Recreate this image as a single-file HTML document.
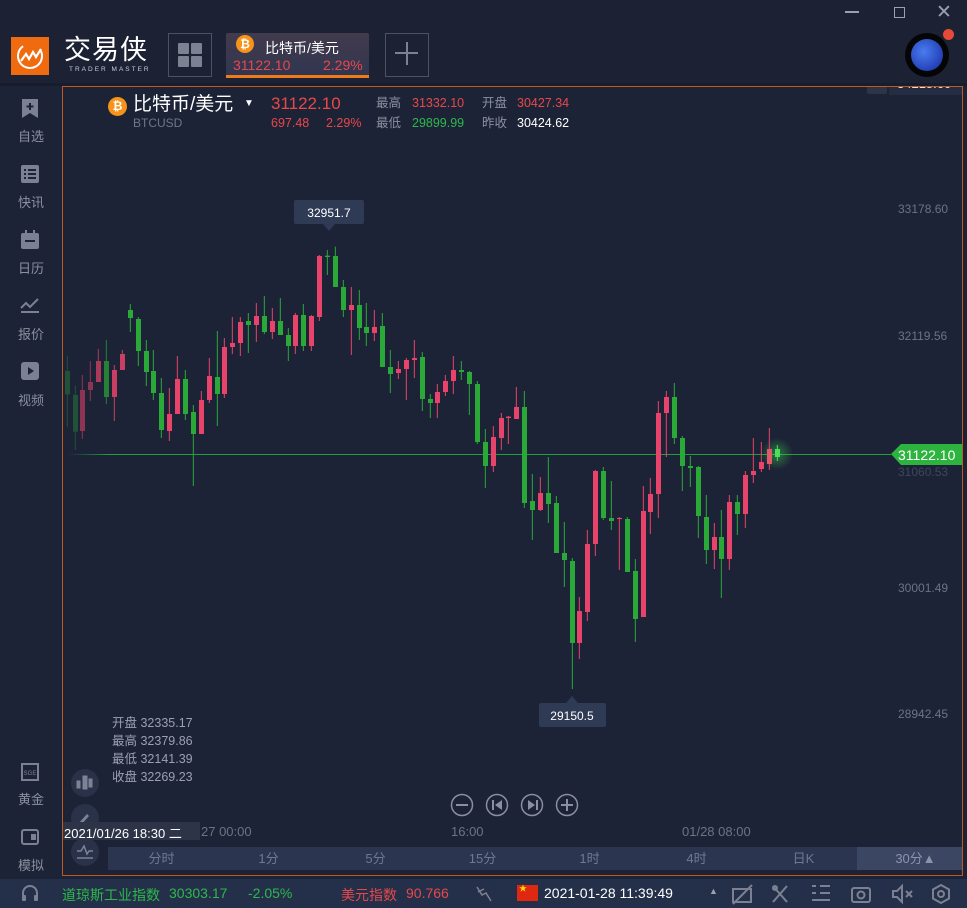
<!DOCTYPE html>
<html><head><meta charset="utf-8">
<style>
*{margin:0;padding:0;box-sizing:border-box}
body{width:967px;height:908px;background:#1d2336;font-family:"Liberation Sans","Noto Sans CJK SC",sans-serif;position:relative;overflow:hidden;color:#fff}
.a{position:absolute;white-space:nowrap}
.side{color:#8a909f;font-size:13px}
.ax{color:#6c7386;font-size:12px}
.h{line-height:16px;font-size:12.5px}
.tf{position:absolute;top:847px;height:23px;line-height:23px;font-size:13px;color:#6f7890;text-align:center;width:107px}
</style></head><body>
<!-- right axis top label (clipped under header) -->
<div class="a" style="left:867px;top:80px;width:20px;height:14px;background:#2c3448;border-radius:2px"></div>
<div class="a" style="left:889px;top:80px;width:73px;height:15px;background:#252d42"></div>
<div class="a ax" style="left:897px;top:76px;color:#dfe2ea;font-size:13px">34218.60</div>
<!-- header -->
<div class="a" style="left:0;top:0;width:967px;height:83px;background:#1c2234"></div>
<div class="a" style="left:0;top:83px;width:967px;height:3px;background:#181d2d"></div>
<div class="a" style="left:845px;top:11px;width:14px;height:1.5px;background:#9aa0ad"></div>
<div class="a" style="left:894px;top:7px;width:11px;height:11px;border:1.5px solid #9aa0ad"></div>
<div class="a" style="left:936px;top:1px;font-size:19px;color:#9aa0ad">✕</div>
<div class="a" style="left:11px;top:37px;width:38px;height:38px;background:#f06a0f"></div>
<svg class="a" style="left:11px;top:37px" width="38" height="38" viewBox="0 0 38 38"><circle cx="19" cy="19" r="12" fill="none" stroke="#fff" stroke-width="2" stroke-dasharray="55 20" transform="rotate(-30 19 19)"/><path d="M10 24 L15 17 L18 22 L22 15 L25 20 L30 12" fill="none" stroke="#fff" stroke-width="2.2"/></svg>
<div class="a" style="left:64px;top:37px;font-size:27px;line-height:27px;color:#fff;letter-spacing:1px">交易侠</div>
<div class="a" style="left:69px;top:66px;font-size:6.5px;color:#c8ccd4;letter-spacing:2px">TRADER MASTER</div>
<div class="a" style="left:168px;top:33px;width:44px;height:44px;border:1px solid #4a5266"></div>
<svg class="a" style="left:178px;top:43px" width="24" height="24"><rect x="0" y="0" width="11" height="11" rx="1" fill="#7c8291"/><rect x="13" y="0" width="11" height="11" rx="1" fill="#7c8291"/><rect x="0" y="13" width="11" height="11" rx="1" fill="#7c8291"/><rect x="13" y="13" width="11" height="11" rx="1" fill="#7c8291"/></svg>
<div class="a" style="left:226px;top:33px;width:143px;height:45px;background:linear-gradient(#433a4d,#2f3650);border-radius:2px 2px 0 0"></div>
<div class="a" style="left:226px;top:75px;width:143px;height:3px;background:#f07a1a"></div>
<div class="a" style="left:236px;top:35px;width:18px;height:18px;border-radius:50%;background:#f7931a;color:#fff;font-size:12px;font-weight:bold;text-align:center;line-height:18px">₿</div>
<div class="a" style="left:265px;top:38px;font-size:14px;color:#fff">比特币/美元</div>
<div class="a" style="left:233px;top:57px;font-size:14px;color:#e8484a">31122.10</div>
<div class="a" style="left:323px;top:57px;font-size:14px;color:#e8484a">2.29%</div>
<div class="a" style="left:385px;top:33px;width:44px;height:44px;border:1px solid #4a5266"></div>
<div class="a" style="left:395px;top:52px;width:23px;height:2px;background:#7c8291"></div>
<div class="a" style="left:406px;top:42px;width:2px;height:23px;background:#7c8291"></div>
<div class="a" style="left:905px;top:33px;width:44px;height:44px;border-radius:50%;background:#050505"></div>
<div class="a" style="left:911px;top:39px;width:32px;height:32px;border-radius:50%;background:radial-gradient(circle at 40% 40%,#4a7cf0,#2442b8 70%,#1a2c80)"></div>
<div class="a" style="left:943px;top:29px;width:11px;height:11px;border-radius:50%;background:#e84a3a"></div>

<!-- sidebar -->
<svg class="a" style="left:20px;top:99px" width="20" height="20"><path d="M2 0h16v19l-8-5-8 5z" fill="#7b8192"/><path d="M10 4v7M6.5 7.5h7" stroke="#1d2336" stroke-width="2"/></svg>
<div class="a side" style="left:18px;top:126px">自选</div>
<svg class="a" style="left:21px;top:165px" width="18" height="18"><rect width="18" height="18" rx="2" fill="#7b8192"/><path d="M3 5h2M7 5h8M3 9h2M7 9h8M3 13h2M7 13h8" stroke="#1d2336" stroke-width="2"/></svg>
<div class="a side" style="left:18px;top:192px">快讯</div>
<svg class="a" style="left:21px;top:230px" width="18" height="19"><rect y="3" width="18" height="16" rx="2" fill="#7b8192"/><path d="M5 0v5M13 0v5" stroke="#7b8192" stroke-width="2"/><path d="M4 11h10" stroke="#1d2336" stroke-width="2"/></svg>
<div class="a side" style="left:18px;top:258px">日历</div>
<svg class="a" style="left:20px;top:297px" width="20" height="17"><path d="M1 11l5-5 4 4 8-8" fill="none" stroke="#7b8192" stroke-width="2"/><path d="M1 15h18" stroke="#7b8192" stroke-width="2"/></svg>
<div class="a side" style="left:18px;top:324px">报价</div>
<svg class="a" style="left:21px;top:362px" width="18" height="18"><rect width="18" height="18" rx="3" fill="#7b8192"/><path d="M7 5l6 4-6 4z" fill="#1d2336"/></svg>
<div class="a side" style="left:18px;top:390px">视频</div>
<svg class="a" style="left:21px;top:763px" width="18" height="18"><rect x="1" y="1" width="16" height="16" fill="none" stroke="#7b8192" stroke-width="2"/><text x="9" y="12" font-size="6" fill="#7b8192" text-anchor="middle" font-family="Liberation Sans">SGE</text></svg>
<div class="a side" style="left:18px;top:789px">黄金</div>
<svg class="a" style="left:21px;top:829px" width="18" height="16"><rect x="1" y="1" width="16" height="14" rx="2" fill="none" stroke="#7b8192" stroke-width="2"/><rect x="10" y="5" width="5" height="6" fill="#7b8192"/></svg>
<div class="a side" style="left:18px;top:855px">模拟</div>

<!-- chart panel -->
<div class="a" style="left:62px;top:86px;width:901px;height:790px;border:1px solid #c0581f"></div>
<div class="a ax" style="left:898px;top:202px">33178.60</div>
<div class="a ax" style="left:898px;top:329px">32119.56</div>
<div class="a ax" style="left:898px;top:465px;color:#3e4659">31060.53</div>
<div class="a ax" style="left:898px;top:581px">30001.49</div>
<div class="a ax" style="left:898px;top:707px">28942.45</div>

<svg class="a" style="left:0;top:0" width="967" height="908">
<defs><linearGradient id="hl" x1="0" x2="1"><stop offset="0" stop-color="#21a03a" stop-opacity="0"/><stop offset="0.05" stop-color="#21a03a"/></linearGradient>
<radialGradient id="gl"><stop offset="0" stop-color="#3ad04a" stop-opacity=".5"/><stop offset="1" stop-color="#3ad04a" stop-opacity="0"/></radialGradient></defs>
<rect x="68" y="454" width="823" height="1" fill="url(#hl)"/>
<circle cx="777" cy="454" r="16" fill="url(#gl)"/>
<g transform="translate(60,250) scale(0.33333)" stroke-width="3">
<g opacity=".35"><line x1="22" y1="318" x2="22" y2="530" stroke="#2aa838"/><rect x="15" y="363" width="15" height="70" fill="#2aa838"/>
<line x1="46" y1="408" x2="46" y2="600" stroke="#2aa838"/><rect x="39" y="435" width="15" height="110" fill="#2aa838"/></g>
<g opacity=".55"><line x1="67" y1="375" x2="67" y2="567" stroke="#e8436a"/><rect x="60" y="420" width="15" height="123" fill="#e8436a"/>
<line x1="91" y1="333" x2="91" y2="453" stroke="#e8436a"/><rect x="84" y="396" width="15" height="24" fill="#e8436a"/></g>
<g opacity=".7"><line x1="115" y1="297" x2="115" y2="396" stroke="#e8436a"/><rect x="108" y="333" width="15" height="63" fill="#e8436a"/>
<line x1="139" y1="270" x2="139" y2="462" stroke="#2aa838"/><rect x="132" y="333" width="15" height="108" fill="#2aa838"/></g>
<g opacity=".85"><line x1="163" y1="345" x2="163" y2="513" stroke="#e8436a"/><rect x="156" y="360" width="15" height="81" fill="#e8436a"/>
<line x1="187" y1="300" x2="187" y2="360" stroke="#e8436a"/><rect x="180" y="312" width="15" height="48" fill="#e8436a"/></g>
<g stroke="#2aa838" fill="#2aa838">
<line x1="211" y1="162" x2="211" y2="246"/><rect x="204" y="180" width="15" height="24" stroke="none"/>
<line x1="235" y1="201" x2="235" y2="348"/><rect x="228" y="207" width="15" height="96" stroke="none"/>
<line x1="259" y1="270" x2="259" y2="408"/><rect x="252" y="303" width="15" height="63" stroke="none"/>
<line x1="280" y1="300" x2="280" y2="450"/><rect x="273" y="363" width="15" height="66" stroke="none"/>
<line x1="304" y1="384" x2="304" y2="564"/><rect x="297" y="429" width="15" height="111" stroke="none"/>
<line x1="376" y1="360" x2="376" y2="510"/><rect x="369" y="387" width="15" height="105" stroke="none"/>
<line x1="400" y1="465" x2="400" y2="708"/><rect x="393" y="486" width="15" height="66" stroke="none"/>
<line x1="472" y1="243" x2="472" y2="528"/><rect x="465" y="381" width="15" height="51" stroke="none"/>
<line x1="565" y1="189" x2="565" y2="309"/><rect x="558" y="213" width="15" height="12" stroke="none"/>
<line x1="613" y1="138" x2="613" y2="252"/><rect x="606" y="198" width="15" height="48" stroke="none"/>
<line x1="661" y1="144" x2="661" y2="255"/><rect x="654" y="213" width="15" height="42" stroke="none"/>
<line x1="685" y1="234" x2="685" y2="333"/><rect x="678" y="255" width="15" height="33" stroke="none"/>
<line x1="730" y1="162" x2="730" y2="303"/><rect x="723" y="195" width="15" height="93" stroke="none"/>
<line x1="802" y1="0" x2="802" y2="75"/><rect x="795" y="17" width="15" height="4" stroke="none"/>
<line x1="826" y1="-10" x2="826" y2="111"/><rect x="819" y="18" width="15" height="93" stroke="none"/>
<line x1="850" y1="90" x2="850" y2="201"/><rect x="843" y="111" width="15" height="69" stroke="none"/>
<line x1="898" y1="120" x2="898" y2="270"/><rect x="891" y="165" width="15" height="69" stroke="none"/>
<line x1="919" y1="159" x2="919" y2="288"/><rect x="912" y="231" width="15" height="18" stroke="none"/>
<line x1="967" y1="189" x2="967" y2="351"/><rect x="960" y="228" width="15" height="123" stroke="none"/>
<line x1="991" y1="300" x2="991" y2="429"/><rect x="984" y="351" width="15" height="21" stroke="none"/>
<line x1="1087" y1="306" x2="1087" y2="483"/><rect x="1080" y="321" width="15" height="126" stroke="none"/>
<line x1="1111" y1="432" x2="1111" y2="504"/><rect x="1104" y="447" width="15" height="12" stroke="none"/>
<line x1="1204" y1="333" x2="1204" y2="390"/><rect x="1197" y="360" width="15" height="6" stroke="none"/>
<line x1="1228" y1="363" x2="1228" y2="495"/><rect x="1221" y="366" width="15" height="36" stroke="none"/>
</g>
<g stroke="#e8436a" fill="#e8436a">
<line x1="328" y1="414" x2="328" y2="573"/><rect x="321" y="492" width="15" height="51" stroke="none"/>
<line x1="352" y1="318" x2="352" y2="492"/><rect x="345" y="387" width="15" height="105" stroke="none"/>
<line x1="424" y1="423" x2="424" y2="552"/><rect x="417" y="450" width="15" height="102" stroke="none"/>
<line x1="448" y1="324" x2="448" y2="459"/><rect x="441" y="378" width="15" height="72" stroke="none"/>
<line x1="493" y1="264" x2="493" y2="444"/><rect x="486" y="291" width="15" height="141" stroke="none"/>
<line x1="517" y1="201" x2="517" y2="312"/><rect x="510" y="279" width="15" height="12" stroke="none"/>
<line x1="541" y1="201" x2="541" y2="318"/><rect x="534" y="216" width="15" height="63" stroke="none"/>
<line x1="589" y1="159" x2="589" y2="276"/><rect x="582" y="198" width="15" height="27" stroke="none"/>
<line x1="637" y1="174" x2="637" y2="267"/><rect x="630" y="213" width="15" height="33" stroke="none"/>
<line x1="706" y1="189" x2="706" y2="312"/><rect x="699" y="195" width="15" height="93" stroke="none"/>
<line x1="754" y1="195" x2="754" y2="303"/><rect x="747" y="198" width="15" height="90" stroke="none"/>
<line x1="778" y1="15" x2="778" y2="213"/><rect x="771" y="18" width="15" height="183" stroke="none"/>
<line x1="874" y1="111" x2="874" y2="315"/><rect x="867" y="165" width="15" height="15" stroke="none"/>
<line x1="943" y1="180" x2="943" y2="273"/><rect x="936" y="231" width="15" height="18" stroke="none"/>
<line x1="1015" y1="333" x2="1015" y2="387"/><rect x="1008" y="357" width="15" height="12" stroke="none"/>
<line x1="1039" y1="324" x2="1039" y2="450"/><rect x="1032" y="330" width="15" height="27" stroke="none"/>
<line x1="1063" y1="270" x2="1063" y2="384"/><rect x="1056" y="324" width="15" height="6" stroke="none"/>
<line x1="1132" y1="402" x2="1132" y2="504"/><rect x="1125" y="426" width="15" height="33" stroke="none"/>
<line x1="1156" y1="375" x2="1156" y2="438"/><rect x="1149" y="393" width="15" height="33" stroke="none"/>
<line x1="1180" y1="318" x2="1180" y2="432"/><rect x="1173" y="360" width="15" height="33" stroke="none"/>
</g>
</g>
<g transform="translate(470,360) scale(0.33333)" stroke-width="3">
<g stroke="#2aa838" fill="#2aa838">
<line x1="22" y1="63" x2="22" y2="252"/><rect x="15" y="72" width="15" height="174" stroke="none"/>
<line x1="46" y1="207" x2="46" y2="384"/><rect x="39" y="246" width="15" height="72" stroke="none"/>
<line x1="163" y1="93" x2="163" y2="444"/><rect x="156" y="141" width="15" height="288" stroke="none"/>
<line x1="187" y1="342" x2="187" y2="540"/><rect x="180" y="423" width="15" height="27" stroke="none"/>
<line x1="235" y1="291" x2="235" y2="489"/><rect x="228" y="399" width="15" height="33" stroke="none"/>
<line x1="259" y1="408" x2="259" y2="579"/><rect x="252" y="429" width="15" height="150" stroke="none"/>
<line x1="283" y1="486" x2="283" y2="681"/><rect x="276" y="579" width="15" height="21" stroke="none"/>
<line x1="307" y1="594" x2="307" y2="987"/><rect x="300" y="603" width="15" height="246" stroke="none"/>
<line x1="400" y1="321" x2="400" y2="480"/><rect x="393" y="333" width="15" height="141" stroke="none"/>
<line x1="424" y1="363" x2="424" y2="510"/><rect x="417" y="474" width="15" height="9" stroke="none"/>
<line x1="472" y1="471" x2="472" y2="636"/><rect x="465" y="477" width="15" height="159" stroke="none"/>
<line x1="496" y1="597" x2="496" y2="846"/><rect x="489" y="633" width="15" height="144" stroke="none"/>
<line x1="613" y1="69" x2="613" y2="252"/><rect x="606" y="111" width="15" height="123" stroke="none"/>
<line x1="637" y1="228" x2="637" y2="393"/><rect x="630" y="234" width="15" height="84" stroke="none"/>
<line x1="661" y1="288" x2="661" y2="381"/><rect x="654" y="318" width="15" height="6" stroke="none"/>
<line x1="685" y1="318" x2="685" y2="534"/><rect x="678" y="321" width="15" height="147" stroke="none"/>
<line x1="709" y1="405" x2="709" y2="612"/><rect x="702" y="471" width="15" height="99" stroke="none"/>
<line x1="754" y1="450" x2="754" y2="714"/><rect x="747" y="531" width="15" height="66" stroke="none"/>
<line x1="802" y1="405" x2="802" y2="525"/><rect x="795" y="426" width="15" height="36" stroke="none"/>
<line x1="922" y1="255" x2="922" y2="303" stroke="#4ae05a"/><rect x="915" y="267" width="15" height="24" fill="#4ae05a" stroke="none"/>
</g>
<g stroke="#e8436a" fill="#e8436a">
<line x1="70" y1="198" x2="70" y2="336"/><rect x="63" y="231" width="15" height="87" stroke="none"/>
<line x1="94" y1="159" x2="94" y2="270"/><rect x="87" y="174" width="15" height="60" stroke="none"/>
<line x1="115" y1="168" x2="115" y2="252"/><rect x="108" y="170" width="15" height="4" stroke="none"/>
<line x1="139" y1="81" x2="139" y2="177"/><rect x="132" y="141" width="15" height="36" stroke="none"/>
<line x1="211" y1="351" x2="211" y2="453"/><rect x="204" y="399" width="15" height="51" stroke="none"/>
<line x1="328" y1="711" x2="328" y2="897"/><rect x="321" y="753" width="15" height="96" stroke="none"/>
<line x1="352" y1="510" x2="352" y2="783"/><rect x="345" y="552" width="15" height="204" stroke="none"/>
<line x1="376" y1="330" x2="376" y2="588"/><rect x="369" y="333" width="15" height="219" stroke="none"/>
<line x1="448" y1="471" x2="448" y2="630"/><rect x="441" y="474" width="15" height="3" stroke="none"/>
<line x1="520" y1="378" x2="520" y2="771"/><rect x="513" y="453" width="15" height="318" stroke="none"/>
<line x1="541" y1="354" x2="541" y2="522"/><rect x="534" y="402" width="15" height="54" stroke="none"/>
<line x1="565" y1="123" x2="565" y2="474"/><rect x="558" y="159" width="15" height="243" stroke="none"/>
<line x1="589" y1="93" x2="589" y2="291"/><rect x="582" y="111" width="15" height="48" stroke="none"/>
<line x1="733" y1="489" x2="733" y2="627"/><rect x="726" y="531" width="15" height="39" stroke="none"/>
<line x1="778" y1="405" x2="778" y2="630"/><rect x="771" y="426" width="15" height="171" stroke="none"/>
<line x1="826" y1="333" x2="826" y2="504"/><rect x="819" y="345" width="15" height="117" stroke="none"/>
<line x1="850" y1="234" x2="850" y2="369"/><rect x="843" y="333" width="15" height="12" stroke="none"/>
<line x1="874" y1="246" x2="874" y2="336"/><rect x="867" y="306" width="15" height="21" stroke="none"/>
<line x1="898" y1="204" x2="898" y2="330"/><rect x="891" y="267" width="15" height="45" fill="#e05a6a" stroke="none"/>
</g>
</g>
<rect x="294" y="200" width="70" height="24" rx="2" fill="#2f3a55"/><path d="M323 224l6 7 6-7z" fill="#2f3a55"/>
<text x="329" y="217" fill="#fff" font-size="12" text-anchor="middle" font-family="Liberation Sans">32951.7</text>
<rect x="539" y="703" width="67" height="24" rx="2" fill="#2f3a55"/><path d="M566 703l6-7 6 7z" fill="#2f3a55"/>
<text x="572" y="720" fill="#fff" font-size="12" text-anchor="middle" font-family="Liberation Sans">29150.5</text>
<path d="M891 454l10-10h61v21h-61z" fill="#2db43f"/>
<text x="898" y="460" fill="#fff" font-size="14" font-family="Liberation Sans">31122.10</text>
<g fill="none" stroke="#8a90a0" stroke-width="1.5">
<circle cx="462" cy="805" r="10.5"/><circle cx="497" cy="805" r="10.5"/><circle cx="532" cy="805" r="10.5"/><circle cx="567" cy="805" r="10.5"/></g>
<g fill="#8a90a0"><rect x="456" y="804" width="12" height="2"/><rect x="561" y="804" width="12" height="2"/><rect x="566" y="799" width="2" height="12"/>
<rect x="492" y="800" width="2" height="10"/><path d="M502 800v10l-7-5z"/><rect x="536" y="800" width="2" height="10"/><path d="M528 800v10l7-5z"/></g>
<circle cx="85" cy="783" r="14" fill="#2a3249"/><circle cx="85" cy="818" r="14" fill="#2a3249"/><circle cx="85" cy="852" r="14" fill="#2a3249"/>
<g fill="#7d8395" stroke="#7d8395"><rect x="77" y="781" width="3" height="7"/><rect x="83" y="776" width="4" height="13"/><rect x="89" y="779" width="3" height="8"/>
<path d="M78 824l9-10 2 2-9 10z" stroke="none"/>
<path d="M77 851h4l3-5 3 8 2-3h4" fill="none" stroke-width="1.5"/><path d="M77 858h16" stroke-width="1.5"/></g>
</svg>

<!-- chart header -->
<div class="a" style="left:108px;top:97px;width:19px;height:19px;border-radius:50%;background:#f7931a;color:#fff;font-size:12px;font-weight:bold;text-align:center;line-height:19px">₿</div>
<div class="a" style="left:133px;top:94px;font-size:19px;line-height:22px;color:#fff">比特币/美元</div>
<div class="a" style="left:244px;top:98px;font-size:10px;color:#fff">▼</div>
<div class="a" style="left:133px;top:116px;font-size:12px;color:#6f7689">BTCUSD</div>
<div class="a" style="left:271px;top:94px;font-size:17px;line-height:20px;color:#e8484a">31122.10</div>
<div class="a h" style="left:271px;top:115px;color:#e8484a">697.48</div>
<div class="a h" style="left:326px;top:115px;color:#e8484a">2.29%</div>
<div class="a h" style="left:376px;top:95px;color:#8a90a0">最高</div>
<div class="a h" style="left:412px;top:95px;color:#e8484a">31332.10</div>
<div class="a h" style="left:482px;top:95px;color:#8a90a0">开盘</div>
<div class="a h" style="left:517px;top:95px;color:#e8484a">30427.34</div>
<div class="a h" style="left:376px;top:115px;color:#8a90a0">最低</div>
<div class="a h" style="left:412px;top:115px;color:#2db84c">29899.99</div>
<div class="a h" style="left:482px;top:115px;color:#8a90a0">昨收</div>
<div class="a h" style="left:517px;top:115px;color:#fff">30424.62</div>

<div class="a" style="left:112px;top:714px;font-size:12.5px;color:#9aa0b0;line-height:18px">开盘 32335.17<br>最高 32379.86<br>最低 32141.39<br>收盘 32269.23</div>

<div class="a" style="left:63px;top:822px;width:137px;height:18px;background:#2d3448"></div>
<div class="a" style="left:64px;top:823px;font-size:13px;color:#fff">2021/01/26 18:30 二</div>
<div class="a ax" style="left:201px;top:824px;font-size:13px">27 00:00</div>
<div class="a ax" style="left:451px;top:824px;font-size:13px">16:00</div>
<div class="a ax" style="left:682px;top:824px;font-size:13px">01/28 08:00</div>

<div class="a" style="left:108px;top:847px;width:854px;height:23px;background:#2b3550"></div>
<div class="a" style="left:857px;top:847px;width:105px;height:23px;background:#3b4663"></div>
<div class="tf" style="left:108px">分时</div><div class="tf" style="left:215px">1分</div><div class="tf" style="left:322px">5分</div><div class="tf" style="left:429px">15分</div><div class="tf" style="left:536px">1时</div><div class="tf" style="left:643px">4时</div><div class="tf" style="left:750px">日K</div><div class="tf" style="left:862px;color:#8c94aa">30分▲</div>

<div class="a" style="left:0;top:879px;width:967px;height:29px;background:#243049"></div>
<svg class="a" style="left:20px;top:884px" width="20" height="20"><path d="M3 12v-3a7 7 0 0 1 14 0v3" fill="none" stroke="#7b8192" stroke-width="2"/><rect x="2" y="11" width="4" height="6" rx="1" fill="#7b8192"/><rect x="14" y="11" width="4" height="6" rx="1" fill="#7b8192"/></svg>
<div class="a" style="left:62px;top:885px;font-size:14px;color:#2db84c">道琼斯工业指数</div>
<div class="a" style="left:169px;top:885px;font-size:14px;color:#2db84c">30303.17</div>
<div class="a" style="left:248px;top:885px;font-size:14px;color:#2db84c">-2.05%</div>
<div class="a" style="left:341px;top:885px;font-size:14px;color:#e8484a">美元指数</div>
<div class="a" style="left:406px;top:885px;font-size:14px;color:#e8484a">90.766</div>
<svg class="a" style="left:474px;top:884px" width="20" height="20"><path d="M3 3l5 8 4-2 5 8M4 8l6-3" fill="none" stroke="#7b8192" stroke-width="1.5"/></svg>
<div class="a" style="left:517px;top:885px;width:21px;height:16px;background:#de2910"></div>
<div class="a" style="left:519px;top:883px;font-size:8px;color:#ffde00">★</div>
<div class="a" style="left:544px;top:885px;font-size:14px;color:#fff">2021-01-28 11:39:49</div>
<div class="a" style="left:709px;top:886px;font-size:9px;color:#9aa0ad">▲</div>
<svg class="a" style="left:730px;top:882px" width="230" height="24" fill="none" stroke="#7b8192" stroke-width="2">
<rect x="3" y="7" width="18" height="13"/><path d="M3 22L22 3"/>
<path d="M43 4l14 16M57 4L43 20" /><circle cx="45" cy="6" r="2"/>
<path d="M82 4h4M90 4h10M82 11h4M90 11h10M82 18h18"/>
<rect x="122" y="6" width="18" height="14" rx="2"/><circle cx="131" cy="13" r="3.5"/>
<path d="M163 9h4l5-5v16l-5-5h-4zM176 9l6 6M182 9l-6 6"/>
<path d="M211 3l8 4.5v9l-8 4.5-8-4.5v-9z"/><circle cx="211" cy="12" r="3"/>
</svg>
</body></html>
